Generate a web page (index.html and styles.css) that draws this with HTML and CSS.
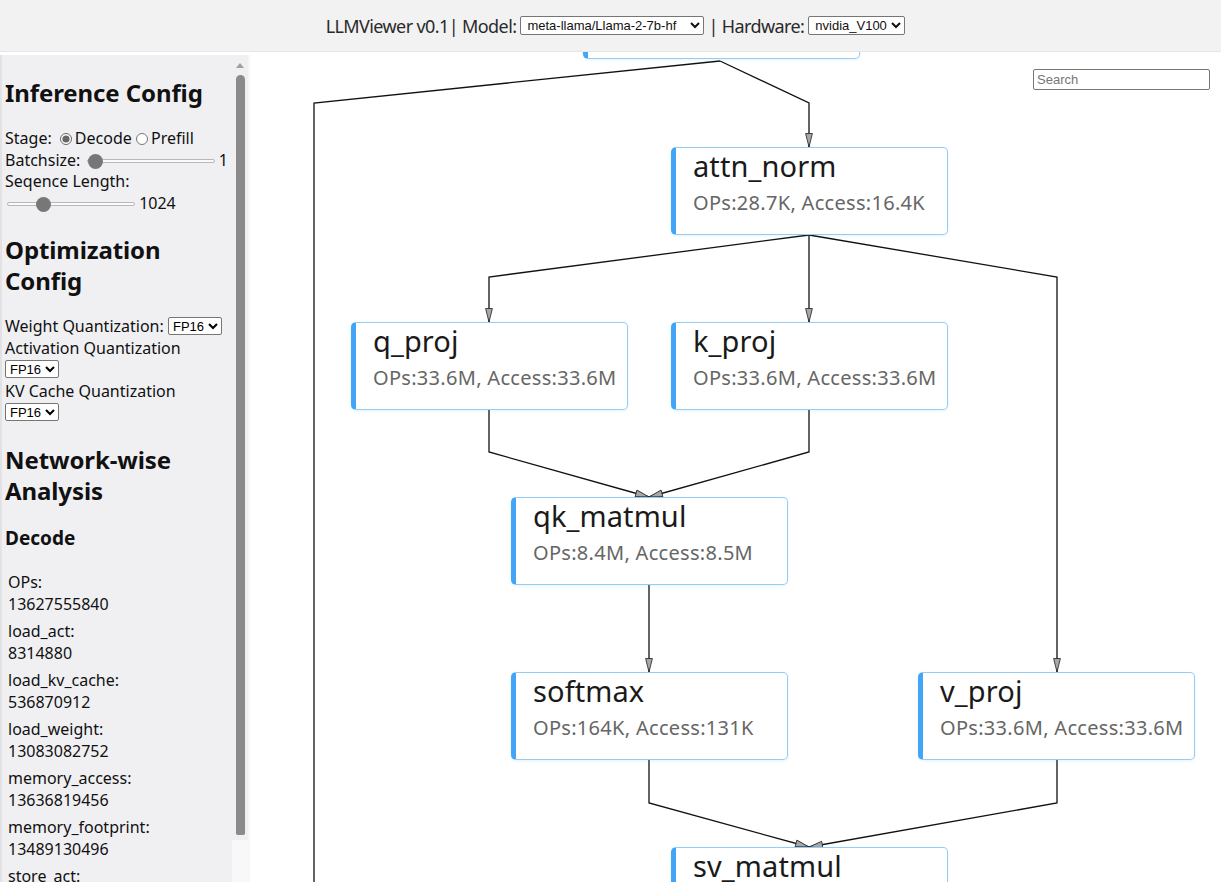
FILE: index.html
```html
<!DOCTYPE html>
<html>
  <head>
    <title>LLMViewer</title>
    <link rel="stylesheet" href="styles.css">
  </head>
  <body>
    <header class="topbar">
      LLMViewer v0.1| Model:
      <select class="sel-model"><option>meta-llama/Llama-2-7b-hf</option></select>
      | Hardware:
      <select class="sel-hw"><option>nvidia_V100</option></select>
    </header>
    <div class="app">
      <aside class="sidebar">
        <div class="side-content">
          <h2>Inference Config</h2>
          <div class="row">Stage:
            <label><input type="radio" name="stage" checked>Decode</label> <label><input type="radio" name="stage">Prefill</label>
          </div>
          <div class="row">Batchsize: <input type="range" class="range batch" min="1" max="256" value="1"> 1</div>
          <div class="row">Seqence Length:</div>
          <div class="row"><input type="range" class="range seq" min="1" max="4096" value="1024"> 1024</div>

          <h2>Optimization Config</h2>
          <div class="row">Weight Quantization: <select class="sel-q"><option>FP16</option></select></div>
          <div class="row">Activation Quantization</div>
          <div class="row"><select class="sel-q"><option>FP16</option></select></div>
          <div class="row">KV Cache Quantization</div>
          <div class="row"><select class="sel-q"><option>FP16</option></select></div>

          <h2>Network-wise Analysis</h2>
          <h3>Decode</h3>
          <div class="stats">
            <div class="stat">OPs:<br>13627555840</div>
            <div class="stat">load_act:<br>8314880</div>
            <div class="stat">load_kv_cache:<br>536870912</div>
            <div class="stat">load_weight:<br>13083082752</div>
            <div class="stat">memory_access:<br>13636819456</div>
            <div class="stat">memory_footprint:<br>13489130496</div>
            <div class="stat">store_act:<br>8392704</div>
          </div>
        </div>
        <div class="scrollbar">
          <span class="scroll-up"></span>
          <span class="scroll-thumb"></span>
        </div>
      </aside>

      <main class="canvas">
        <svg class="edges" width="971" height="830" viewBox="0 0 971 830">
          <defs>
            <marker id="arrow" viewBox="0 0 16 10" refX="15.5" refY="5" markerWidth="15" markerHeight="9" markerUnits="userSpaceOnUse" orient="auto">
              <path d="M0.5,1.2 L15.5,5 L0.5,8.8 z" fill="#a3a9ab" stroke="#222" stroke-width="0.9"/>
            </marker>
          </defs>
          <g fill="none" stroke="#111" stroke-width="1.3">
            <polyline points="470,9 559,51 559,95" marker-end="url(#arrow)"/>
            <polyline points="470,9 64,51 64,840"/>
            <polyline points="559,183 239,225 239,270" marker-end="url(#arrow)"/>
            <polyline points="559,183 559,270" marker-end="url(#arrow)"/>
            <polyline points="559,183 807,225 807,620" marker-end="url(#arrow)"/>
            <polyline points="239,357 239,400 399,445" marker-end="url(#arrow)"/>
            <polyline points="559,357 559,400 399,445" marker-end="url(#arrow)"/>
            <polyline points="399,531 399,620" marker-end="url(#arrow)"/>
            <polyline points="399,707 399,751 559,795" marker-end="url(#arrow)"/>
            <polyline points="807,707 807,751 559,795" marker-end="url(#arrow)"/>
          </g>
        </svg>

        <div class="node n-embed">
          <div class="node-title">embed_tokens</div>
          <div class="node-info">OPs:0, Access:8.2K</div>
        </div>
        <div class="node n-attn-norm">
          <div class="node-title">attn_norm</div>
          <div class="node-info">OPs:28.7K, Access:16.4K</div>
        </div>
        <div class="node n-q-proj">
          <div class="node-title">q_proj</div>
          <div class="node-info">OPs:33.6M, Access:33.6M</div>
        </div>
        <div class="node n-k-proj">
          <div class="node-title">k_proj</div>
          <div class="node-info">OPs:33.6M, Access:33.6M</div>
        </div>
        <div class="node n-qk">
          <div class="node-title">qk_matmul</div>
          <div class="node-info">OPs:8.4M, Access:8.5M</div>
        </div>
        <div class="node n-softmax">
          <div class="node-title">softmax</div>
          <div class="node-info">OPs:164K, Access:131K</div>
        </div>
        <div class="node n-v-proj">
          <div class="node-title">v_proj</div>
          <div class="node-info">OPs:33.6M, Access:33.6M</div>
        </div>
        <div class="node n-sv">
          <div class="node-title">sv_matmul</div>
          <div class="node-info">OPs:8.4M, Access:8.5M</div>
        </div>

        <input class="search" type="text" placeholder="Search">
      </main>
    </div>
  </body>
</html>
```

FILE: styles.css
```css
* {
    box-sizing: border-box;
}
html, body {
    margin: 0;
    height: 100%;
    overflow: hidden;
}
body {
    font-family: "Noto Sans", "Open Sans", sans-serif;
    color: #111;
    background: #fff;
}
.topbar {
    height: 52px;
    background: #f2f2f2;
    border-bottom: 1px solid #e6e6e6;
    display: flex;
    align-items: center;
    justify-content: center;
    gap: 4px;
    font-size: 18px;
    letter-spacing: -0.6px;
    color: #2a2a2a;
    padding-left: 10px;
}
.topbar select {
    font-family: "Liberation Sans", Arial, sans-serif;
    font-size: 13px;
    letter-spacing: 0;
    height: 19px;
    padding: 0 0 0 2px;
    border: 1px solid #767676;
    border-radius: 2px;
    background: #fff;
    color: #111;
}
.sel-model {
    width: 184px;
}
.sel-hw {
    width: 97px;
}
.app {
    display: flex;
    height: 830px;
}

/* sidebar */
.sidebar {
    width: 250px;
    flex: none;
    display: flex;
    background: #f0f0f3;
    border-left: 2px solid #e2e2e4;
    border-right: 2px solid #f7f7f7;
    margin-top: 3px;
    overflow: hidden;
}
.side-content {
    flex: 1;
    padding: 2px 0 0 3px;
    font-size: 16px;
    line-height: 21.5px;
    overflow: hidden;
    white-space: nowrap;
}
.side-content h2 {
    font-size: 24px;
    line-height: 31px;
    margin: 20px 0;
    white-space: normal;
    letter-spacing: -0.1px;
}
.side-content h3 {
    font-size: 19px;
    line-height: 25px;
    margin: 18px 0 20px;
}
.row input[type="radio"] {
    width: 12px;
    height: 12px;
    margin: 0 3px 0 4px;
    vertical-align: -1px;
    accent-color: #666;
}
.row label + label input[type="radio"] {
    margin-left: 0;
}
.range {
    -webkit-appearance: none;
    appearance: none;
    height: 14px;
    margin: 0 0 0 2px;
    vertical-align: -2px;
    background: transparent;
}
.range::-webkit-slider-runnable-track {
    height: 4px;
    background: #fafafa;
    border: 1px solid #b8b8b8;
    border-radius: 3px;
}
.range::-webkit-slider-thumb {
    -webkit-appearance: none;
    width: 15px;
    height: 15px;
    margin-top: -6px;
    border-radius: 50%;
    background: #777;
}
.batch {
    width: 128px;
}
.seq {
    width: 128px;
}
.sel-q {
    font-family: "Liberation Sans", Arial, sans-serif;
    font-size: 13px;
    height: 18px;
    width: 54px;
    padding: 0;
    border: 1px solid #767676;
    border-radius: 2px;
    background: #fff;
    vertical-align: 1px;
}
.stats {
    padding-left: 3px;
}
.stat {
    line-height: 22px;
    margin-bottom: 5px;
}
.scrollbar {
    width: 16px;
    flex: none;
    display: flex;
    flex-direction: column;
    align-items: center;
    padding-top: 8px;
    background: linear-gradient(#f0f0f3 0, #f0f0f3 785px, #f8f8f8 785px);
}
.scroll-up {
    width: 0;
    height: 0;
    border-left: 4px solid transparent;
    border-right: 4px solid transparent;
    border-bottom: 5px solid #a0a0a0;
}
.scroll-thumb {
    margin-top: 7px;
    width: 9px;
    height: 760px;
    background: #8a8a8a;
    border-radius: 5px 5px 2px 2px;
}

/* graph canvas */
.canvas {
    position: relative;
    flex: 1;
    overflow: hidden;
    background: #fff;
}
.edges {
    position: absolute;
    left: 0;
    top: 0;
}
.node {
    position: absolute;
    width: 277px;
    height: 88px;
    background: #fff;
    border: 1px solid #93cdf5;
    border-left: 5px solid #42a5f5;
    border-radius: 5px;
    box-shadow: 0 1px 3px rgba(66, 165, 245, 0.15);
    padding: 0 0 0 17px;
    white-space: nowrap;
}
.node-title {
    font-size: 29px;
    line-height: 38px;
    margin-top: -1px;
    color: #1a1a1a;
    letter-spacing: 0.1px;
}
.node-info {
    font-size: 20px;
    line-height: 36px;
    color: #666;
    letter-spacing: 0.3px;
}
.n-embed {
    left: 333px;
    top: -81px;
}
.n-attn-norm {
    left: 421px;
    top: 95px;
}
.n-q-proj {
    left: 101px;
    top: 270px;
}
.n-k-proj {
    left: 421px;
    top: 270px;
}
.n-qk {
    left: 261px;
    top: 445px;
}
.n-softmax {
    left: 261px;
    top: 620px;
}
.n-v-proj {
    left: 668px;
    top: 620px;
}
.n-sv {
    left: 421px;
    top: 795px;
}
.search {
    position: absolute;
    top: 17px;
    right: 11px;
    width: 177px;
    height: 21px;
    border: 1px solid #767676;
    border-radius: 2px;
    padding: 0 3px;
    font-family: "Liberation Sans", Arial, sans-serif;
    font-size: 13px;
}
.search::placeholder {
    color: #757575;
}
```
